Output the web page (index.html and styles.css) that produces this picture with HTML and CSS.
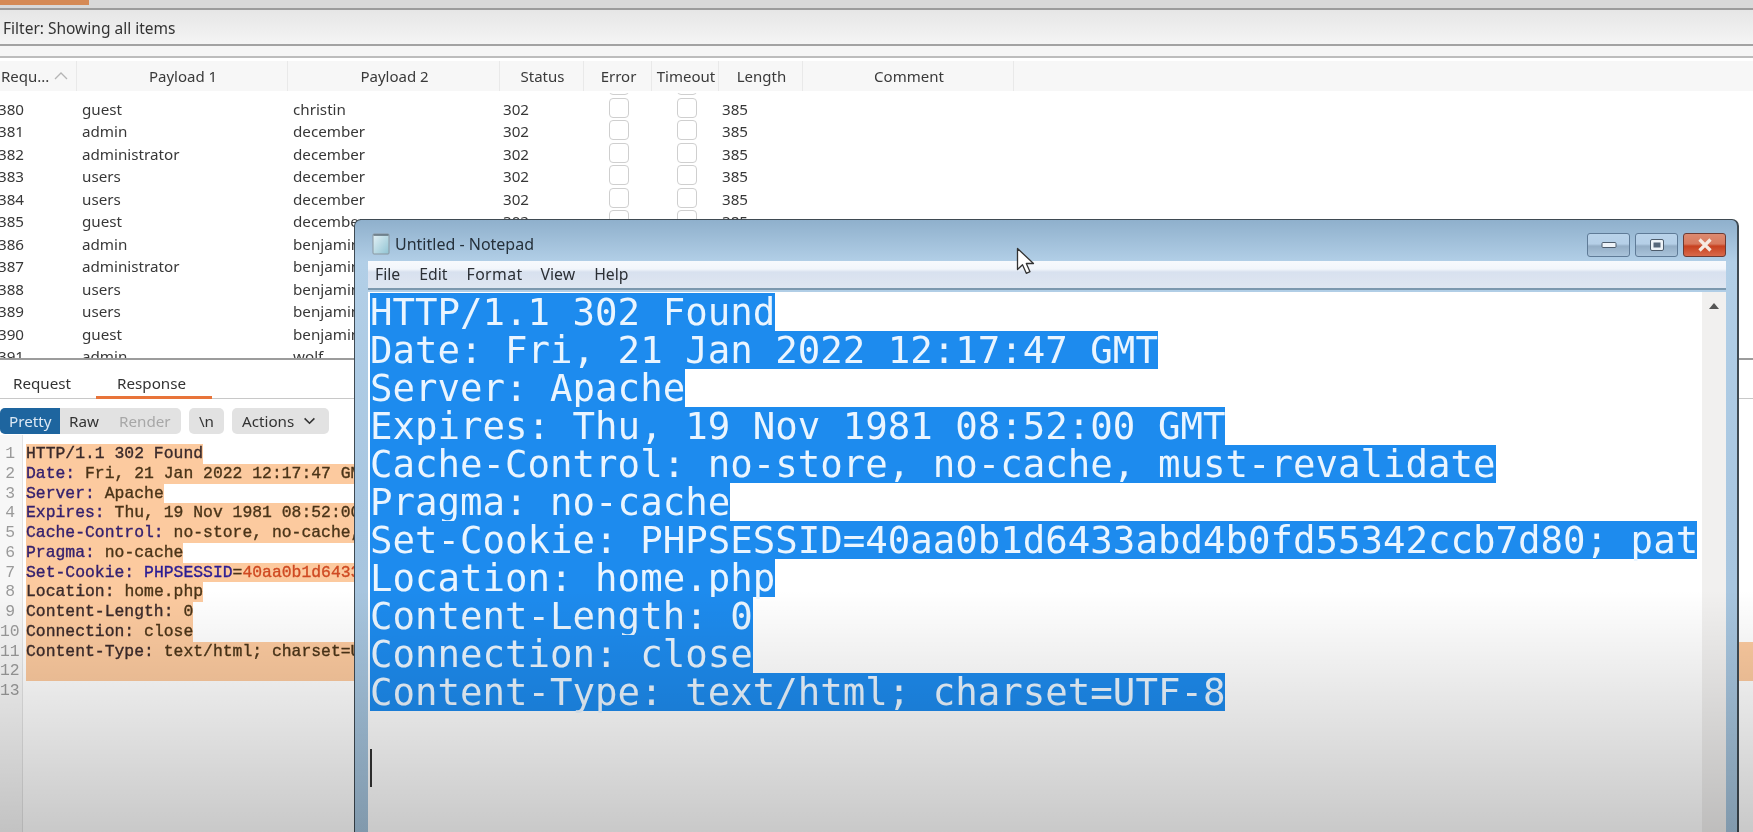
FILE: index.html
```html
<!DOCTYPE html>
<html lang="en">
<head>
<meta charset="utf-8">
<title>Burp Intruder and Notepad</title>
<link rel="stylesheet" href="styles.css">
</head>
<body>
<div class="page">
  <div class="top-strip"><div class="top-tab"></div></div>
  <div class="filter">Filter: Showing all items</div>
  <div class="filter-gap"></div>
  <div class="results">
    <div class="head">
      <div class="hc hc-sort">Requ...<svg class="sort" viewBox="0 0 14 8" width="14" height="8"><path d="M1 7 7 1l6 6" fill="none" stroke="#b5b5b5" stroke-width="1.3"/></svg></div>
      <div class="hc">Payload 1</div>
      <div class="hc">Payload 2</div>
      <div class="hc">Status</div>
      <div class="hc">Error</div>
      <div class="hc">Timeout</div>
      <div class="hc">Length</div>
      <div class="hc">Comment</div>
      <div class="hc hc-end"></div>
    </div>
    <div class="rows">
      <div class="row row-ghost"><span class="id">379</span><span></span><span></span><span></span><i class="cb"></i><i class="cb"></i><span></span></div>
      <div class="row"><span class="id">380</span><span class="p1">guest</span><span class="p2">christin</span><span class="st">302</span><i class="cb"></i><i class="cb"></i><span class="len">385</span></div>
      <div class="row"><span class="id">381</span><span class="p1">admin</span><span class="p2">december</span><span class="st">302</span><i class="cb"></i><i class="cb"></i><span class="len">385</span></div>
      <div class="row"><span class="id">382</span><span class="p1">administrator</span><span class="p2">december</span><span class="st">302</span><i class="cb"></i><i class="cb"></i><span class="len">385</span></div>
      <div class="row"><span class="id">383</span><span class="p1">users</span><span class="p2">december</span><span class="st">302</span><i class="cb"></i><i class="cb"></i><span class="len">385</span></div>
      <div class="row"><span class="id">384</span><span class="p1">users</span><span class="p2">december</span><span class="st">302</span><i class="cb"></i><i class="cb"></i><span class="len">385</span></div>
      <div class="row"><span class="id">385</span><span class="p1">guest</span><span class="p2">december</span><span class="st">302</span><i class="cb"></i><i class="cb"></i><span class="len">385</span></div>
      <div class="row"><span class="id">386</span><span class="p1">admin</span><span class="p2">benjamin</span><span class="st">302</span><i class="cb"></i><i class="cb"></i><span class="len">385</span></div>
      <div class="row"><span class="id">387</span><span class="p1">administrator</span><span class="p2">benjamin</span><span class="st">302</span><i class="cb"></i><i class="cb"></i><span class="len">385</span></div>
      <div class="row"><span class="id">388</span><span class="p1">users</span><span class="p2">benjamin</span><span class="st">302</span><i class="cb"></i><i class="cb"></i><span class="len">385</span></div>
      <div class="row"><span class="id">389</span><span class="p1">users</span><span class="p2">benjamin</span><span class="st">302</span><i class="cb"></i><i class="cb"></i><span class="len">385</span></div>
      <div class="row"><span class="id">390</span><span class="p1">guest</span><span class="p2">benjamin</span><span class="st">302</span><i class="cb"></i><i class="cb"></i><span class="len">385</span></div>
      <div class="row"><span class="id">391</span><span class="p1">admin</span><span class="p2">wolf</span><span class="st">302</span><i class="cb"></i><i class="cb"></i><span class="len">385</span></div>
    </div>
  </div>
  <div class="detail">
    <div class="tabs">
      <div class="tab">Request</div>
      <div class="tab tab-on">Response</div>
    </div>
    <div class="tools">
      <div class="seg">
        <span class="seg-b seg-on">Pretty</span>
        <span class="seg-b seg-raw">Raw</span>
        <span class="seg-b seg-off">Render</span>
      </div>
      <span class="btn btn-n">\n</span>
      <span class="btn btn-a">Actions<svg viewBox="0 0 14 9" width="13" height="8"><path d="M1.500 1.500 7 7l5.500-5.500" fill="none" stroke="#333" stroke-width="1.800"/></svg></span>
    </div>
    <div class="code">
      <div class="gutter">
        <div>1</div><div>2</div><div>3</div><div>4</div><div>5</div><div>6</div><div>7</div><div>8</div><div>9</div><div>10</div><div>11</div><div>12</div><div>13</div>
      </div>
      <div class="lines">
        <div class="ln"><span class="s"><b class="d">HTTP/1.1 302 Found</b></span></div>
        <div class="ln"><span class="s"><b class="k">Date:</b> <b>Fri, 21 Jan 2022 12:17:47 GMT</b>&#160;&#160;&#160;&#160;&#160;&#160;&#160;&#160;&#160;&#160;</span></div>
        <div class="ln"><span class="s"><b class="k">Server:</b> <b>Apache</b></span></div>
        <div class="ln"><span class="s"><b class="k">Expires:</b> <b>Thu, 19 Nov 1981 08:52:00 GMT</b>&#160;&#160;&#160;&#160;&#160;&#160;&#160;</span></div>
        <div class="ln"><span class="s"><b class="k">Cache-Control:</b> <b>no-store, no-cache, must-revalidate</b></span></div>
        <div class="ln"><span class="s"><b class="k">Pragma:</b> <b>no-cache</b></span></div>
        <div class="ln"><span class="s"><b class="k">Set-Cookie:</b> <b class="n">PHPSESSID</b><b>=</b><b class="v">40aa0b1d6433abd4b0fd55342ccb7d80</b><b>; path=/</b></span></div>
        <div class="ln"><span class="s"><b class="d">Location:</b> <b>home.php</b></span></div>
        <div class="ln"><span class="s"><b class="d">Content-Length:</b> <b>0</b></span></div>
        <div class="ln"><span class="s"><b class="d">Connection:</b> <b>close</b></span></div>
        <div class="ln ln-full"><span class="s"><b class="d">Content-Type:</b> <b>text/html; charset=UTF-8</b></span></div>
        <div class="ln ln-full"><span class="s">&#160;</span></div>
        <div class="ln"></div>
      </div>
    </div>
  </div>

  <div class="notepad">
    <div class="np-title">
      <svg class="np-icon" viewBox="0 0 18 22" width="18" height="22"><defs><linearGradient id="npg" x1="0" y1="0" x2="1" y2="1"><stop offset="0" stop-color="#e6f2f6"/><stop offset="1" stop-color="#8fc3d3"/></linearGradient></defs><rect x="1" y="1" width="16" height="20" rx="1" fill="url(#npg)" stroke="#8a97a0"/><path d="M1.500 2h15" stroke="#5d6c78" stroke-width="1.500"/></svg>
      <span class="np-name">Untitled - Notepad</span>
      <div class="np-btns">
        <span class="wb"><svg viewBox="0 0 16 8" width="16" height="8"><rect x="1" y="1.500" width="14" height="5" rx="1" fill="#eef3f8" stroke="#4d5c6c"/></svg></span>
        <span class="wb"><svg viewBox="0 0 16 14" width="16" height="14"><rect x="1.500" y="1.500" width="13" height="11" rx="1.500" fill="#eef3f8" stroke="#4d5c6c"/><rect x="4.500" y="4.500" width="7" height="5" fill="#56677a"/></svg></span>
        <span class="wb wb-x"><svg viewBox="0 0 16 14" width="16" height="14"><path d="M2.500 1.500 13.500 12.500M13.500 1.500 2.500 12.500" stroke="#f5ebe2" stroke-width="3.200"/></svg></span>
      </div>
    </div>
    <div class="np-menu">
      <span>File</span><span>Edit</span><span class="m-format">Format</span><span>View</span><span>Help</span>
    </div>
    <div class="np-body">
      <div class="np-text">
        <div class="tl"><span>HTTP/1.1 302 Found</span></div>
        <div class="tl"><span>Date: Fri, 21 Jan 2022 12:17:47 GMT</span></div>
        <div class="tl"><span>Server: Apache</span></div>
        <div class="tl"><span>Expires: Thu, 19 Nov 1981 08:52:00 GMT</span></div>
        <div class="tl"><span>Cache-Control: no-store, no-cache, must-revalidate</span></div>
        <div class="tl"><span>Pragma: no-cache</span></div>
        <div class="tl"><span>Set-Cookie: PHPSESSID=40aa0b1d6433abd4b0fd55342ccb7d80; path=/</span></div>
        <div class="tl"><span>Location: home.php</span></div>
        <div class="tl"><span>Content-Length: 0</span></div>
        <div class="tl"><span>Connection: close</span></div>
        <div class="tl"><span>Content-Type: text/html; charset=UTF-8</span></div>
        <div class="tl tl-empty"></div>
        <div class="caret"></div>
      </div>
      <div class="np-scroll"><svg viewBox="0 0 10 6" width="10" height="6"><path d="M5 0 10 6H0z" fill="#555"/></svg></div>
    </div>
  </div>

  <svg class="mouse" viewBox="0 0 20 28" width="20" height="28"><path d="M1.500 1.500V22.500L6.500 17.800 10.300 26.300 14 24.700 10.300 16.500H17.500z" fill="#fff" stroke="#333" stroke-width="1.300" stroke-linejoin="round"/></svg>
  <div class="shade"></div>
</div>
</body>
</html>
```

FILE: styles.css
```css
* { box-sizing: border-box; }
html, body { margin: 0; padding: 0; background: #fff; }
.page {
  position: relative;
  width: 1753px;
  height: 832px;
  overflow: hidden;
  display: flex;
  flex-direction: column;
  font-family: "Noto Sans", "Open Sans", sans-serif;
  font-size: 15.2px;
  color: #2b2b2b;
  background: #fff;
  filter: blur(0.35px);
}
.top-strip {
  flex: none;
  height: 10px;
  background: #d9d9d9;
  border-bottom: 2px solid #9c9c9c;
}
.top-tab { width: 89px; height: 5px; background: #d58a56; }
.filter {
  flex: none;
  height: 36px;
  padding-left: 3px;
  line-height: 36px;
  font-size: 15.5px;
  background: linear-gradient(#e6e6e6, #f4f4f4);
  border-bottom: 2px solid #a2a2a2;
  color: #333;
}
.filter-gap {
  flex: none;
  height: 12px;
  background: #f5f5f5;
  border-bottom: 2px solid #bcbcbc;
}
.results {
  flex: none;
  height: 302px;
  overflow: hidden;
  border-bottom: 2px solid #9c9c9c;
}
.head {
  position: relative;
  z-index: 1;
  display: grid;
  grid-template-columns: 77px 211px 212px 84px 68px 67px 84px 211px 1fr;
  height: 35px;
  background: #f7f7f7;
  border-top: 3px solid #fff;
  border-bottom: 2px solid #fff;
  font-size: 15px;
}
.hc {
  display: flex;
  align-items: center;
  justify-content: center;
  border-right: 1px solid #e9e9e9;
  color: #3a3a3a;
  padding-left: 2px;
}
.hc-sort { justify-content: flex-start; gap: 5px; padding-left: 1px; }
.hc-end { border-right: 0; }
.rows { margin-top: -17.500px; }
.row {
  display: grid;
  grid-template-columns: 77px 211px 212px 84px 68px 67px 84px 1fr;
  height: 22.470px;
  line-height: 22.470px;
  align-items: center;
  color: #383838;
}
.row-ghost span { visibility: hidden; }
.id { text-indent: -2px; }
.p1 { padding-left: 5px; }
.p2 { padding-left: 5px; }
.st { padding-left: 3px; }
.len { padding-left: 3px; }
.cb {
  display: block;
  justify-self: center;
  width: 20px;
  height: 20px;
  margin: -3px 0 0 2px;
  border: 1.500px solid #cfcfcf;
  border-radius: 4px;
  background: #fff;
}
.detail { flex: 1; display: flex; flex-direction: column; min-height: 0; }
.tabs {
  flex: none;
  display: flex;
  height: 39px;
  border-bottom: 1px solid #c8c8c8;
}
.tab {
  width: 96px;
  padding-left: 13px;
  line-height: 47px;
  color: #333;
}
.tab-on {
  width: 116px;
  padding-left: 21px;
  border-bottom: 3px solid #e8743a;
  height: 39px;
}
.tools {
  flex: none;
  display: flex;
  align-items: center;
  gap: 8px;
  height: 36px;
  padding-top: 8px;
  color: #333;
}
.seg {
  display: flex;
  height: 26px;
  background: #e2e2e2;
  border-radius: 5px;
  overflow: hidden;
  width: 181px;
}
.seg-b { line-height: 26px; padding-left: 9px; }
.seg-on { width: 60px; background: #1e659f; color: #dce8f4; }
.seg-raw { width: 50px; }
.seg-off { color: #a7a7a7; }
.btn {
  display: flex;
  align-items: center;
  height: 26px;
  background: #e2e2e2;
  border-radius: 5px;
}
.btn-n { width: 35px; justify-content: center; }
.btn-a { width: 97px; padding-left: 10px; gap: 9px; }
.code {
  flex: 1;
  display: flex;
  font-family: "Liberation Mono", "Courier New", monospace;
  font-size: 16.400px;
  line-height: 19.750px;
  min-height: 0;
}
.gutter {
  flex: none;
  width: 23px;
  padding: 9px 7px 0 0;
  border-right: 1px solid #e3e3e3;
  color: #9a9a9a;
  text-align: right;
  background: #f7f7f7;
}
.lines { flex: 1; padding: 9px 0 0 3px; min-width: 0; }
.ln { height: 19.750px; white-space: pre; }
.ln .s { display: inline-block; height: 19.750px; background: #fcca9f; }
.ln-full .s { display: block; }
.ln b { font-weight: 400; -webkit-text-stroke: 0.35px currentColor; color: #4a3418; }
.ln b.k { color: #34206e; }
.ln b.d { color: #3a2a2a; }
.ln b.n { color: #2a1c94; }
.ln b.v { color: #cf4a22; }

.notepad {
  position: absolute;
  left: 354px;
  top: 219px;
  width: 1385px;
  height: 640px;
  display: flex;
  flex-direction: column;
  padding: 0 11px 0 13px;
  background: linear-gradient(#8fb0cc 0, #b2cfe7 42px, #a8c6e0 300px, #a3c2da 100%);
  border: 1px solid #3f4a52;
  border-right: 2px solid #3f4a52;
  border-radius: 7px 7px 0 0;
  font-family: "Noto Sans", "Open Sans", sans-serif;
  font-size: 15.800px;
  color: #27323c;
  z-index: 2;
}
.np-title {
  flex: none;
  display: flex;
  align-items: center;
  height: 41px;
  padding: 6px 0 0 4px;
  gap: 5px;
  margin-right: -1px;
}
.np-name { font-size: 16px; color: #25303a; }
.np-btns { margin-left: auto; display: flex; gap: 5px; align-self: flex-start; padding-top: 7px; margin-right: 1px; }
.wb {
  display: flex;
  align-items: center;
  justify-content: center;
  width: 43px;
  height: 24px;
  border: 1px solid #5f7b97;
  border-radius: 3px;
  background: linear-gradient(#b9d3ea 0, #b5cfe7 45%, #94aec6 55%, #a9c3da 100%);
}
.wb-x {
  background: linear-gradient(#dc8a70 0, #d87a5e 45%, #c7411f 55%, #d9694a 100%);
  border-color: #6d3b33;
}
.np-menu {
  flex: none;
  display: flex;
  align-items: center;
  height: 29px;
  padding: 0 0 2px 7px;
  background: linear-gradient(#f7fafd 0, #f2f6fb 8px, #d8e1ef 11px, #dfe6f1 100%);
  border-bottom: 2px solid #7c98ae;
  color: #2b2f35;
}
.np-menu span { margin-right: 19px; }
.np-menu .m-format { margin-right: 18px; letter-spacing: 0.4px; }
.np-body {
  flex: none;
  display: flex;
  height: 570px;
  margin-top: 2px;
  background: #fff;
}
.np-text {
  flex: 1;
  min-width: 0;
  overflow: hidden;
  padding: 1px 0 0 2px;
  margin-right: 5px;
  font-family: "DejaVu Sans Mono", "Liberation Mono", monospace;
  font-size: 37.400px;
  line-height: 38px;
  color: #eaf5ff;
}
.tl { height: 38px; white-space: pre; }
.tl span { display: inline-block; height: 38px; background: #1d8bee; }
.caret { width: 2px; height: 38px; background: #333; }
.np-scroll {
  flex: none;
  width: 24px;
  padding-top: 11px;
  text-align: center;
  background: #f1f0ef;
  line-height: 0;
}
.mouse { position: absolute; left: 1016px; top: 247px; z-index: 3; }
.shade {
  position: absolute;
  inset: 0;
  z-index: 4;
  pointer-events: none;
  background: linear-gradient(rgba(0,0,0,0) 0, rgba(0,0,0,0) 590px, rgba(0,0,0,0.21) 832px);
}
```
